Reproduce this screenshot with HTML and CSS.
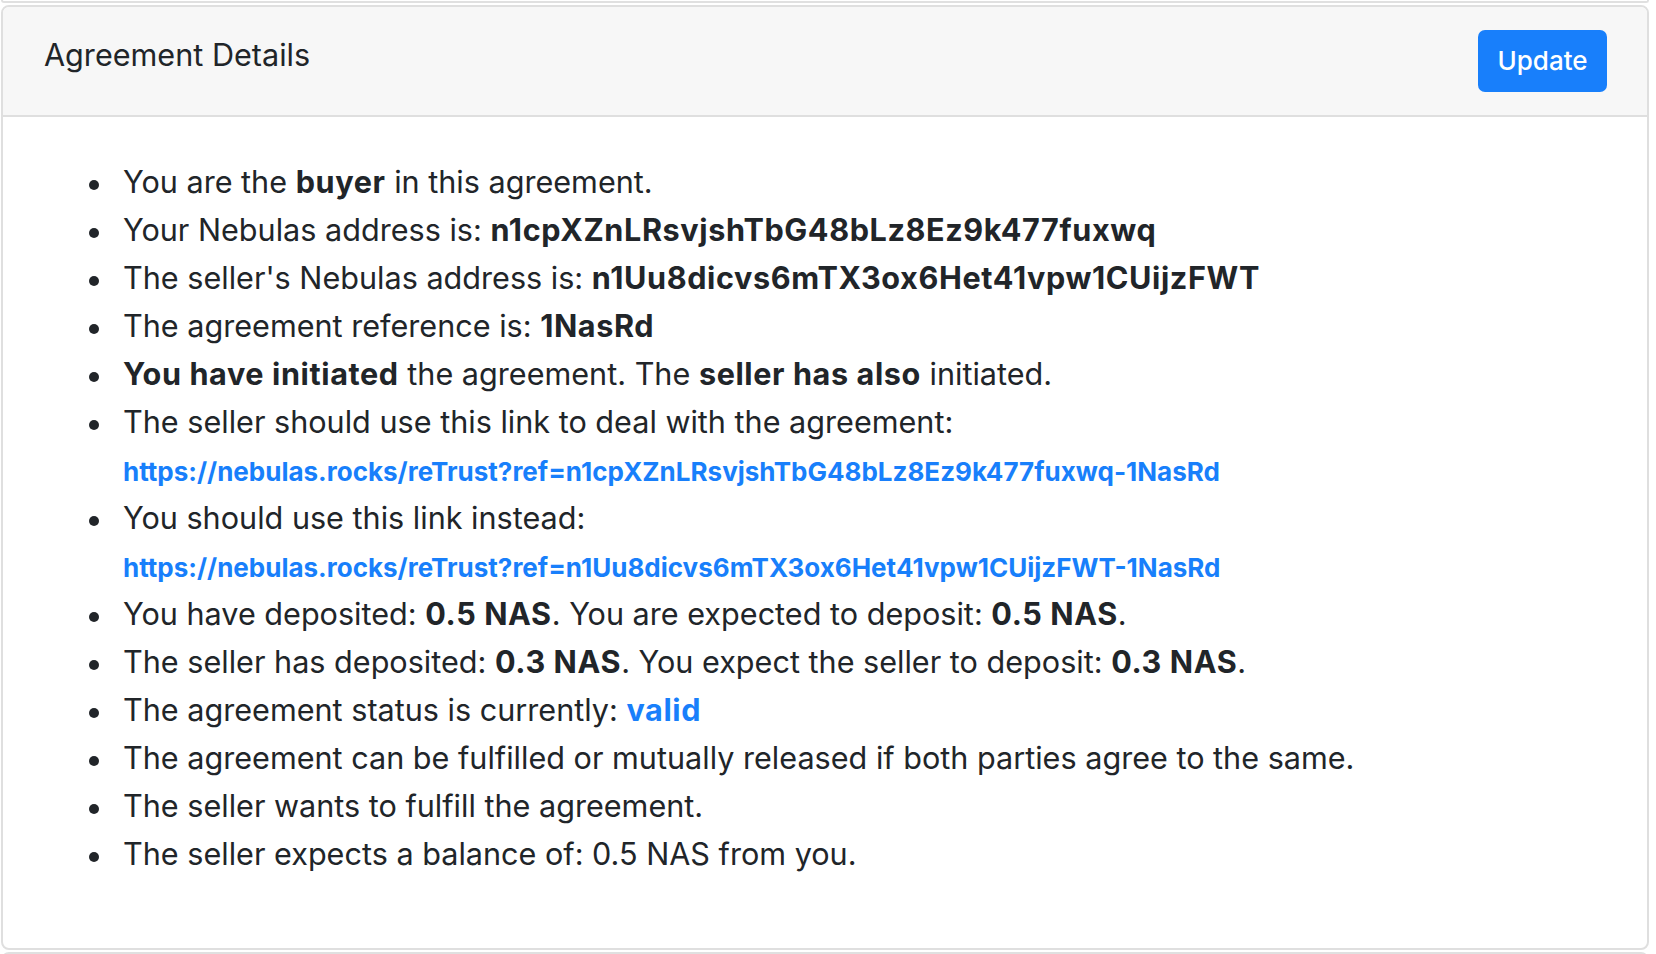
FILE: index.html
```html
<!DOCTYPE html>
<html lang="en">
<head>
<meta charset="utf-8">
<title>Agreement Details</title>
<link rel="stylesheet" href="styles.css">
</head>
<body>
<div class="page">
  <div class="prev-card"></div>
  <div class="card">
    <div class="card-header">
      <h5 class="card-title">Agreement Details</h5>
      <button class="btn" type="button">Update</button>
    </div>
    <div class="card-body">
      <ul class="details">
        <li>You are the <b>buyer</b> in this agreement.</li>
        <li>Your Nebulas address is: <b>n1cpXZnLRsvjshTbG48bLz8Ez9k477fuxwq</b></li>
        <li>The seller's Nebulas address is: <b>n1Uu8dicvs6mTX3ox6Het41vpw1CUijzFWT</b></li>
        <li>The agreement reference is: <b>1NasRd</b></li>
        <li><b>You have initiated</b> the agreement. The <b>seller has also</b> initiated.</li>
        <li>The seller should use this link to deal with the agreement:
          <a class="ref-link" href="#">https://nebulas.rocks/reTrust?ref=n1cpXZnLRsvjshTbG48bLz8Ez9k477fuxwq-1NasRd</a></li>
        <li>You should use this link instead:
          <a class="ref-link" href="#">https://nebulas.rocks/reTrust?ref=n1Uu8dicvs6mTX3ox6Het41vpw1CUijzFWT-1NasRd</a></li>
        <li>You have deposited: <b>0.5 NAS</b>. You are expected to deposit: <b>0.5 NAS</b>.</li>
        <li>The seller has deposited: <b>0.3 NAS</b>. You expect the seller to deposit: <b>0.3 NAS</b>.</li>
        <li>The agreement status is currently: <a class="status" href="#">valid</a></li>
        <li>The agreement can be fulfilled or mutually released if both parties agree to the same.</li>
        <li>The seller wants to fulfill the agreement.</li>
        <li>The seller expects a balance of: 0.5 NAS from you.</li>
      </ul>
    </div>
  </div>
  <div class="next-card"></div>
</div>
</body>
</html>
```

FILE: styles.css
```css
* {
  box-sizing: border-box;
}

html, body {
  margin: 0;
  padding: 0;
  background: #ffffff;
}

body {
  font-family: Inter, "Liberation Sans", sans-serif;
  color: #212529;
  width: 1656px;
  height: 954px;
  overflow: hidden;
}

.page {
  padding: 0 7px 0 1px;
}

.prev-card {
  height: 3px;
  border: 2px solid #e0e0e0;
  border-top: 0;
  border-radius: 0 0 8px 8px;
}

.next-card {
  height: 8px;
  margin-top: 2px;
  border: 2px solid #e0e0e0;
  border-bottom: 0;
  border-radius: 8px 8px 0 0;
}

.card {
  margin-top: 2px;
  height: 945px;
  border: 2px solid #dfdfdf;
  border-radius: 8px;
  background: #ffffff;
  overflow: hidden;
}

.card-header {
  display: flex;
  justify-content: space-between;
  align-items: flex-start;
  padding: 23px 40px 23px 41px;
  background: #f7f7f7;
  border-bottom: 2px solid #dfdfdf;
}

.card-title {
  margin: 2px 0 0;
  font-size: 30.6px;
  font-weight: 400;
  line-height: 46px;
  color: #212529;
}

.btn {
  height: 62px;
  width: 129px;
  padding: 0;
  border: 0;
  border-radius: 7px;
  background: #187ffb;
  color: #ffffff;
  font-family: Inter, "Liberation Sans", sans-serif;
  font-size: 26px;
  font-weight: 500;
  line-height: 62px;
}

.card-body {
  padding: 41px 40px 40px 41px;
}

.details {
  margin: 0;
  padding-left: 79px;
  list-style: none;
  font-size: 30.6px;
  line-height: 48px;
}

.details li::before {
  content: "";
  display: inline-block;
  width: 10px;
  height: 10px;
  margin-left: -34px;
  margin-right: 24px;
  border-radius: 50%;
  background: #212529;
  vertical-align: middle;
}

.details b {
  font-weight: 700;
  letter-spacing: 0.6px;
}

.ref-link {
  display: block;
  padding-top: 3px;
  color: #187ffb;
  text-decoration: none;
  font-size: 26px;
  font-weight: 700;
  line-height: 45px;
}

.status {
  color: #187ffb;
  text-decoration: none;
  font-weight: 700;
  letter-spacing: 0.6px;
}
```
